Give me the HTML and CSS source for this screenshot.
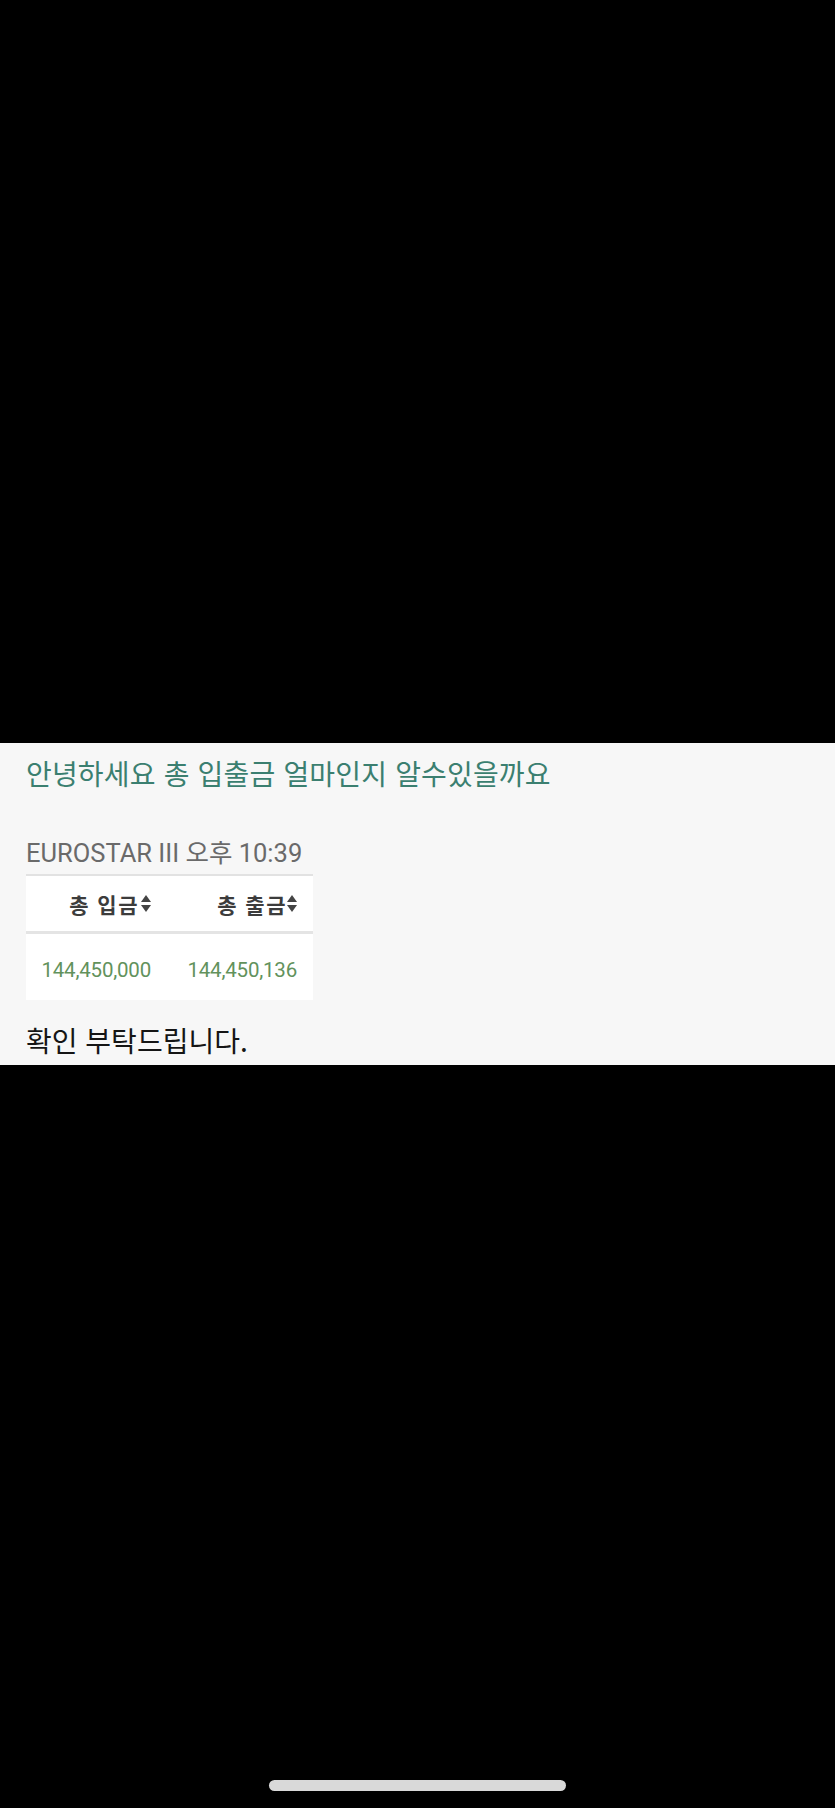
FILE: index.html
```html
<!DOCTYPE html>
<html lang="ko">
<head>
<meta charset="utf-8">
<title>Chat</title>
<link rel="stylesheet" href="styles.css">
</head>
<body>
<div class="screen">
  <div class="top-space"></div>
  <section class="panel">
    <p class="question">안녕하세요 총 입출금 얼마인지 알수있을까요</p>
    <p class="meta">EUROSTAR III 오후 10:39</p>
    <div class="table-card">
      <div class="row head">
        <div class="cell c1">총 입금<svg class="sort" viewBox="0 0 10 20"><path d="M5 1 L10 8 L0 8 Z"/><path d="M0 11 L10 11 L5 18 Z"/></svg></div>
        <div class="cell c2">총 출금<svg class="sort" viewBox="0 0 10 20"><path d="M5 1 L10 8 L0 8 Z"/><path d="M0 11 L10 11 L5 18 Z"/></svg></div>
      </div>
      <div class="row body">
        <div class="cell c1">144,450,000</div>
        <div class="cell c2">144,450,136</div>
      </div>
    </div>
    <p class="message">확인 부탁드립니다.</p>
  </section>
  <div class="bottom-space">
    <div class="home-bar"></div>
  </div>
</div>
</body>
</html>
```
FILE: styles.css
```css
html, body {
  margin: 0;
  padding: 0;
  background: #000;
}
.screen {
  width: 835px;
  height: 1808px;
  display: flex;
  flex-direction: column;
  font-family: "Noto Sans CJK KR", "Noto Sans", sans-serif;
}
.top-space {
  height: 743px;
  flex: none;
}
.panel {
  background: #f7f7f7;
  padding: 12px 0 7px 26px;
  display: flex;
  flex-direction: column;
  align-items: flex-start;
}
.panel p {
  margin: 0;
}
.question {
  font-size: 28px;
  line-height: 36px;
  color: #3b7f70;
  letter-spacing: 0.17px;
}
.meta {
  margin-top: 47px !important;
  font-family: Roboto, "Noto Sans CJK KR", sans-serif;
  font-size: 25.5px;
  line-height: 30px;
  color: #6a6a6a;
}
.table-card {
  margin-top: 6px;
  width: 287px;
  background: #fff;
  border-top: 2px solid #e2e2e2;
}
.row {
  display: grid;
  grid-template-columns: 141px 146px;
}
.row.head {
  height: 55px;
  border-bottom: 3px solid #e4e4e4;
  align-items: center;
}
.row.body {
  height: 66px;
  align-items: center;
}
.cell {
  display: flex;
  justify-content: flex-end;
  align-items: center;
  padding-right: 16px;
}
.head .cell {
  font-size: 21px;
  font-weight: 700;
  color: #3c3c3c;
  letter-spacing: 1.5px;
}
.body .cell {
  font-family: Roboto, sans-serif;
  font-size: 20.5px;
  color: #62925c;
  letter-spacing: -0.2px;
  padding-top: 6px;
}
.sort {
  width: 10px;
  height: 20px;
  margin-left: 2px;
  fill: #444;
}
.cell.c2 .sort {
  margin-left: 0;
}
.message {
  margin-top: 22px !important;
  font-size: 28px;
  line-height: 36px;
  color: #151515;
}
.bottom-space {
  flex: 1;
  display: flex;
  justify-content: center;
  align-items: flex-end;
  padding-bottom: 17px;
}
.home-bar {
  width: 297px;
  height: 11px;
  border-radius: 6px;
  background: #d9d9d9;
}
```
